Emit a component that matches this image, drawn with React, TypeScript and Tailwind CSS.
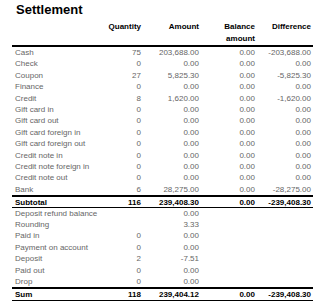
import React from 'react';

type Row = { label: string; qty?: string; amount?: string; balance?: string; diff?: string };

const mainRows: Row[] = [
  { label: 'Cash', qty: '75', amount: '203,688.00', balance: '0.00', diff: '-203,688.00' },
  { label: 'Check', qty: '0', amount: '0.00', balance: '0.00', diff: '0.00' },
  { label: 'Coupon', qty: '27', amount: '5,825.30', balance: '0.00', diff: '-5,825.30' },
  { label: 'Finance', qty: '0', amount: '0.00', balance: '0.00', diff: '0.00' },
  { label: 'Credit', qty: '8', amount: '1,620.00', balance: '0.00', diff: '-1,620.00' },
  { label: 'Gift card in', qty: '0', amount: '0.00', balance: '0.00', diff: '0.00' },
  { label: 'Gift card out', qty: '0', amount: '0.00', balance: '0.00', diff: '0.00' },
  { label: 'Gift card foreign in', qty: '0', amount: '0.00', balance: '0.00', diff: '0.00' },
  { label: 'Gift card foreign out', qty: '0', amount: '0.00', balance: '0.00', diff: '0.00' },
  { label: 'Credit note in', qty: '0', amount: '0.00', balance: '0.00', diff: '0.00' },
  { label: 'Credit note foreign in', qty: '0', amount: '0.00', balance: '0.00', diff: '0.00' },
  { label: 'Credit note out', qty: '0', amount: '0.00', balance: '0.00', diff: '0.00' },
  { label: 'Bank', qty: '6', amount: '28,275.00', balance: '0.00', diff: '-28,275.00' },
];

const extraRows: Row[] = [
  { label: 'Deposit refund balance', amount: '0.00' },
  { label: 'Rounding', amount: '3.33' },
  { label: 'Paid in', qty: '0', amount: '0.00' },
  { label: 'Payment on account', qty: '0', amount: '0.00' },
  { label: 'Deposit', qty: '2', amount: '-7.51' },
  { label: 'Paid out', qty: '0', amount: '0.00' },
  { label: 'Drop', qty: '0', amount: '0.00' },
];

const cols = 'grid grid-cols-[88px_43px_58px_56px_56px]';

const DataRow = ({ row }: { row: Row }) => (
  <div className={`${cols} h-[11.4px] leading-[11.4px] text-[#666]`}>
    <div className="pl-[3px] whitespace-nowrap">{row.label}</div>
    <div className="pr-[2px] text-right">{row.qty}</div>
    <div className="pr-[2px] text-right">{row.amount}</div>
    <div className="pr-[2px] text-right">{row.balance}</div>
    <div className="pr-[2px] text-right">{row.diff}</div>
  </div>
);

const TotalRow = ({ row, tall }: { row: Row; tall?: boolean }) => (
  <div
    className={`${cols} ${tall ? 'h-[13.5px]' : 'h-[12.5px]'} items-center border-t-2 border-b border-black font-bold text-black`}
  >
    <div className="pl-[3px]">{row.label}</div>
    <div className="pr-[2px] text-right">{row.qty}</div>
    <div className="pr-[2px] text-right">{row.amount}</div>
    <div className="pr-[2px] text-right">{row.balance}</div>
    <div className="pr-[2px] text-right">{row.diff}</div>
  </div>
);

export default function App() {
  return (
    <div className="w-[326px] h-[303px] bg-white font-['Liberation_Sans',Arial,sans-serif] overflow-hidden">
      <h1 className="pl-[16px] pt-[2px] text-[13px] leading-[16px] font-bold text-black">Settlement</h1>
      <div className="ml-[12px] w-[301px] text-[8px]">
        <div className={`${cols} mt-[3px] border-b-2 border-black font-bold text-black leading-[12px]`}>
          <div />
          <div className="pr-[2px] text-right">Quantity</div>
          <div className="pr-[2px] text-right">Amount</div>
          <div className="pl-[4px] pr-[2px] text-right">Balance amount</div>
          <div className="pr-[2px] text-right">Difference</div>
        </div>
        {mainRows.map(r => (
          <DataRow key={r.label} row={r} />
        ))}
        <TotalRow row={{ label: 'Subtotal', qty: '116', amount: '239,408.30', balance: '0.00', diff: '-239,408.30' }} />
        {extraRows.map(r => (
          <DataRow key={r.label} row={r} />
        ))}
        <TotalRow tall row={{ label: 'Sum', qty: '118', amount: '239,404.12', balance: '0.00', diff: '-239,408.30' }} />
      </div>
    </div>
  );
}
